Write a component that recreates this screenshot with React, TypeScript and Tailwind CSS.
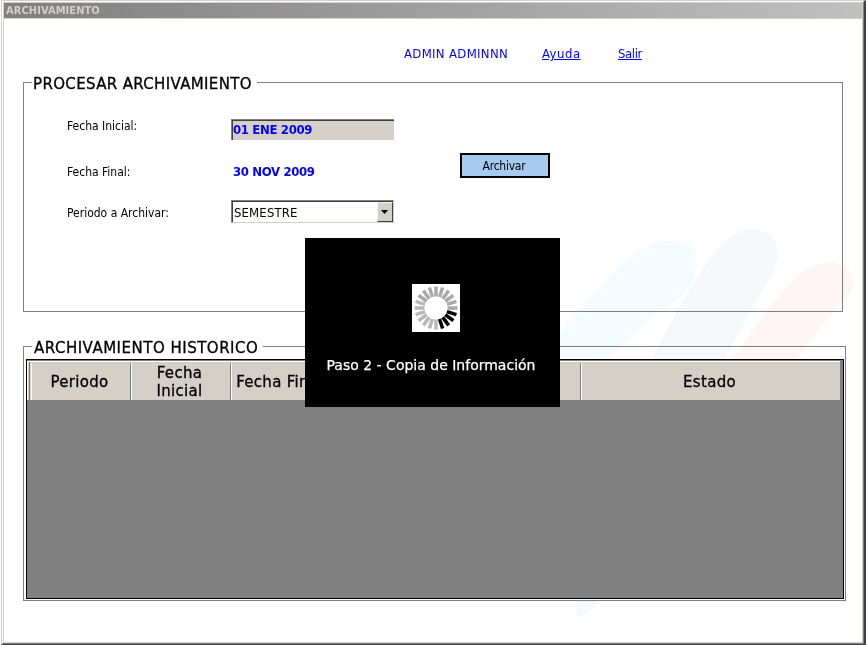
import React from 'react';

const spokes = Array.from({ length: 20 }, (_, i) => i * 18);

function Spinner() {
  return (
    <svg className="block h-12 w-12 bg-white" viewBox="0 0 48 48">
      {spokes.map((a) => (
        <line
          key={a}
          x1="24"
          y1="12.5"
          x2="24"
          y2="2.5"
          strokeWidth="3.5"
          stroke={a > 100 && a < 170 ? '#000' : a > 170 && a < 300 ? '#b8b8b8' : '#a9a9a9'}
          transform={`rotate(${a} 24 24)`}
        />
      ))}
    </svg>
  );
}

function Swooshes() {
  return (
    <svg className="pointer-events-none absolute left-0 top-0 h-[645px] w-[866px]" viewBox="0 0 866 645">
      <path
        d="M545 358 C558 334 569 323 582 308 C612 272 638 241 671 240.500 C690 241 698 252 696.700 266 C695 284 683 297 664 309 C644 322 628 339 609 359 Z"
        fill="#f5fcff"
      />
      <path
        d="M652 358 L677 311 C690 289 699 273 711 257 C724 240 737 229 754 229 C770 230 779 242 777 258 C776 271 766 284 750 312 L725 358 C690 440 640 550 598 601 C591 611 582 618 579 616.500 C575 613 575 608 575.700 600 C592 520 620 420 652 358 Z"
        fill="#f7f8fc"
      />
      <path
        d="M732 359 L768 310 C779 296 789 283 800 275 C810 266 820 262 831 262 C845 263 854 272 852.700 285 C851 295 845 300 836 309 C821 325 810 340 796 359 Z"
        fill="#fff5f6"
      />
    </svg>
  );
}

function HeaderCell({ className, children }: { className: string; children?: React.ReactNode }) {
  return (
    <div
      className={`flex h-[37px] items-center justify-center border-l border-l-white pr-[3px] text-center font-['DejaVu_Sans',sans-serif] text-[15px] leading-[18px] tracking-[0.3px] [-webkit-text-stroke:0.3px_black] [font-stretch:normal] ${className}`}
    >
      {children}
    </div>
  );
}

export default function App() {
  return (
    <div className="relative flex h-[645px] w-[866px] flex-col overflow-hidden bg-white font-['DejaVu_Sans_Condensed','DejaVu_Sans',sans-serif] text-black [font-stretch:condensed]">
      <div className="ml-px flex h-[645px] w-[865px] flex-col border-b border-l border-r-2 border-t border-[#404040] border-l-[#d4d0c8] border-t-[#d4d0c8]">
        <div className="flex grow flex-col border border-white border-b-[#808080] border-r-[#808080]">
          <div className="flex grow flex-col border border-[#d4d0c8]">
            <div className="flex h-[15px] items-center bg-gradient-to-r from-[#808080] to-[#c0c0c0] pl-0.5 text-[11px] font-bold leading-[15px] text-[#d4d0c8]">
              <span className="tracking-[0.08px]">ARCHIVAMIENTO</span>
            </div>
            <div className="h-px bg-[#d4d0c8]" />

            <div className="flex flex-col">
              <nav className="flex h-[54px] pl-[400px] pt-[27px] text-[13px] leading-4 text-[#0000ff]">
                <span className="w-[138px] whitespace-nowrap tracking-[0.33px]">ADMIN ADMINNN</span>
                <span className="w-[76px]">
                  <a className="tracking-[0.5px] underline">Ayuda</a>
                </span>
                <a className="tracking-[-0.4px] underline">Salir</a>
              </nav>

              <fieldset className="ml-[19px] h-[239px] w-[820px] border border-[#808080] pl-2 shadow-[1px_1px_0_#fff]">
                <legend className="h-[19px] w-[225px] whitespace-nowrap pl-px font-['DejaVu_Sans',sans-serif] text-[15px] leading-[23px] tracking-[0.35px] [-webkit-text-stroke:0.3px_black] [font-stretch:normal]">
                  PROCESAR ARCHIVAMIENTO
                </legend>
                <div className="flex pl-[35px] text-[12px] leading-4">
                  <div className="flex w-[164px] flex-col pt-[26px]">
                    <span>Fecha Inicial:</span>
                    <span className="mt-[30px]">Fecha Final:</span>
                    <span className="mt-[25px]">Periodo a Archivar:</span>
                  </div>
                  <div className="flex w-[163px] flex-col pt-[27px]">
                    <div className="h-[21px] border-l border-t border-[#808080] bg-[#d4d0c8]">
                      <div className="h-5 border-l border-t border-[#404040] text-[13px] font-bold leading-[18px] tracking-[-0.33px] text-[#0000ff]">
                        01 ENE 2009
                      </div>
                    </div>
                    <span className="mt-[24px] pl-0.5 text-[13px] font-bold tracking-[-0.35px] text-[#0000ff]">30 NOV 2009</span>
                    <div className="mt-[20px] h-[23px] border border-[#808080] border-b-[#d4d0c8] border-r-[#d4d0c8]">
                      <div className="flex h-[21px] justify-between border-l border-t border-[#404040] bg-white pl-px leading-[22px]">
                        <span className="text-[13px] tracking-[0.15px]">SEMESTRE</span>
                        <div className="flex h-5 w-4 items-center justify-center border border-[#f4f2ee] border-b-[#404040] border-r-[#404040] bg-[#d4d0c8]">
                          <svg className="mr-px h-1 w-[7px]" viewBox="0 0 7 4">
                            <path d="M0 0h7L3.500 4z" fill="#000" />
                          </svg>
                        </div>
                      </div>
                    </div>
                  </div>
                  <button className="ml-[66px] mt-[61px] h-[25px] w-[90px] border-2 border-black bg-[#a6caf0] pr-0.5 pt-px text-[12px] leading-[21px] tracking-[-0.25px]">
                    Archivar
                  </button>
                </div>
              </fieldset>

              <fieldset className="ml-[19px] mt-[25px] h-[264px] w-[823px] border border-[#808080] pl-0.5 shadow-[1px_1px_0_#fff]">
                <legend className="ml-1.5 h-[19px] w-[231px] whitespace-nowrap pl-0.5 font-['DejaVu_Sans',sans-serif] text-[15px] leading-[23px] tracking-[0.5px] [-webkit-text-stroke:0.3px_black] [font-stretch:normal]">
                  ARCHIVAMIENTO HISTORICO
                </legend>
                <div className="mt-[3px] h-[240px] w-[818px] border border-black bg-[#808080] pt-px">
                  <div className="flex h-[39px] w-[813px] border-t border-white bg-[#d4d0c8]">
                    <div className="mr-px w-[3px] border-l border-r border-l-white border-r-[#808080]" />
                    <div className="flex pt-px">
                      <HeaderCell className="w-[100px] border-r border-r-[#808080]">Periodo</HeaderCell>
                      <HeaderCell className="w-[100px] border-r border-r-[#808080]">
                        Fecha
                        <br />
                        Inicial
                      </HeaderCell>
                      <HeaderCell className="w-[100px] border-r border-r-[#808080]">
                        <span className="whitespace-nowrap">Fecha Final</span>
                      </HeaderCell>
                      <HeaderCell className="w-[250px] border-r border-r-[#808080]" />
                      <HeaderCell className="w-[259px]">Estado</HeaderCell>
                    </div>
                  </div>
                </div>
              </fieldset>
            </div>
          </div>
        </div>
      </div>

      <div className="absolute inset-0 mix-blend-multiply [clip-path:polygon(0_0,100%_0,100%_359px,0_359px,0_601px,100%_601px,100%_100%,0_100%,0_0)]">
        <Swooshes />
      </div>

      <div className="absolute left-[305px] top-[238px] flex h-[169px] w-[255px] flex-col items-center bg-black pt-[46px] text-white">
        <div className="ml-1.5">
          <Spinner />
        </div>
        <div className="mt-6 whitespace-nowrap pr-[3px] font-['DejaVu_Sans',sans-serif] text-[14px] leading-[18px] [-webkit-text-stroke:0.25px_white] [font-stretch:normal]">
          Paso 2 - Copia de Información
        </div>
      </div>
    </div>
  );
}
